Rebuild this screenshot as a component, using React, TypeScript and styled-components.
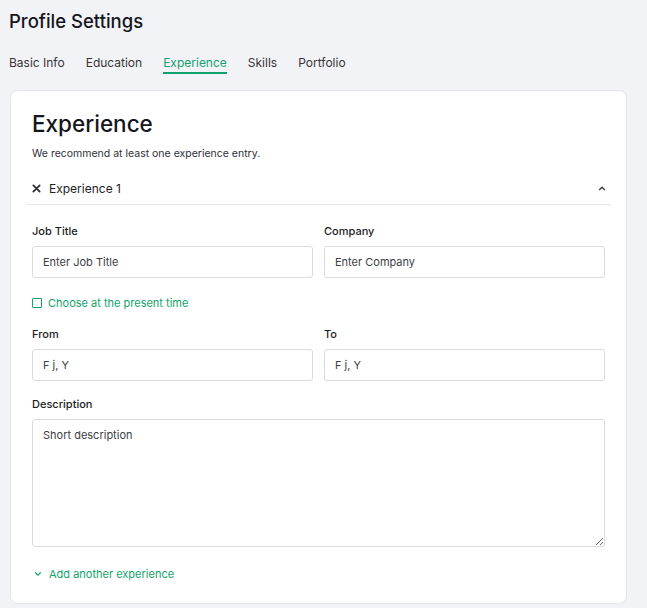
import React, { useState } from "react";
import styled, { createGlobalStyle } from "styled-components";

const GlobalStyle = createGlobalStyle`
  html, body {
    margin: 0;
    padding: 0;
    background: #f2f3f7;
    font-family: "Inter", "Liberation Sans", sans-serif;
    color: #1b1d24;
  }
  * { box-sizing: border-box; }
`;

const TABS = ["Basic Info", "Education", "Experience", "Skills", "Portfolio"];

export default function App() {
  const [active, setActive] = useState("Experience");
  const [present, setPresent] = useState(false);

  return (
    <Page>
      <GlobalStyle />
      <Title>Profile Settings</Title>
      <TabBar>
        {TABS.map((t) => (
          <Tab key={t} $active={t === active} onClick={() => setActive(t)}>
            {t}
          </Tab>
        ))}
      </TabBar>
      <Card>
        <Inner>
          <Heading>Experience</Heading>
          <Hint>We recommend at least one experience entry.</Hint>
        </Inner>
        <EntryHeader>
          <EntryName>
            <svg width="9" height="9" viewBox="0 0 10 10">
              <path d="M1.5 1.5 L8.5 8.5 M8.5 1.5 L1.5 8.5" stroke="#2b2d33" strokeWidth="2" strokeLinecap="round" />
            </svg>
            Experience 1
          </EntryName>
          <svg width="8" height="5" viewBox="0 0 10 6">
            <path d="M1.5 5 L5 1.5 L8.5 5" stroke="#3a3d46" strokeWidth="1.8" fill="none" />
          </svg>
        </EntryHeader>
        <Inner>
          <Row>
            <Field>
              <Label>Job Title</Label>
              <Input placeholder="Enter Job Title" />
            </Field>
            <Field>
              <Label>Company</Label>
              <Input placeholder="Enter Company" />
            </Field>
          </Row>
          <Check>
            <CheckBox type="checkbox" checked={present} onChange={(e) => setPresent(e.target.checked)} />
            Choose at the present time
          </Check>
          <Row>
            <Field>
              <Label>From</Label>
              <Input placeholder="F j, Y" />
            </Field>
            <Field>
              <Label>To</Label>
              <Input placeholder="F j, Y" />
            </Field>
          </Row>
          <Field>
            <Label>Description</Label>
            <TextArea placeholder="Short description" />
          </Field>
          <AddLink>
            <svg width="8" height="6" viewBox="0 0 10 6">
              <path d="M1.5 1 L5 4.5 L8.5 1" stroke="#12a36c" strokeWidth="1.6" fill="none" />
            </svg>
            Add another experience
          </AddLink>
        </Inner>
      </Card>
    </Page>
  );
}

const Page = styled.div`
  padding: 9px 20px 0 9px;
`;

const Title = styled.h1`
  margin: 0;
  font-size: 18.5px;
  font-weight: 500;
  line-height: 24px;
  color: #14161c;
`;

const TabBar = styled.div`
  display: flex;
  gap: 21px;
  margin-top: 22px;
`;

const Tab = styled.div<{ $active: boolean }>`
  font-size: 12px;
  line-height: 16px;
  padding-bottom: 1px;
  color: ${(p) => (p.$active ? "#12a36c" : "#3a3336")};
  border-bottom: 2px solid ${(p) => (p.$active ? "#12a36c" : "transparent")};
  cursor: pointer;
`;

const Card = styled.div`
  margin: 16px 0 0 1px;
  background: #fff;
  border: 1px solid #e3e5ea;
  border-radius: 8px;
  padding: 16px 15px 22px;
`;

const Inner = styled.div`
  padding: 0 6px;
`;

const Heading = styled.h2`
  margin: 2px 0 0;
  font-size: 22.5px;
  font-weight: 500;
  line-height: 30px;
  color: #14161c;
`;

const Hint = styled.p`
  margin: 7px 0 0;
  font-size: 10.5px;
  line-height: 16px;
  color: #2e3038;
`;

const EntryHeader = styled.div`
  display: flex;
  align-items: center;
  justify-content: space-between;
  margin-top: 10px;
  padding: 0 5px 0 6px;
  height: 33px;
  border-bottom: 1px solid #e6e7eb;
`;

const EntryName = styled.div`
  display: flex;
  align-items: center;
  gap: 8px;
  font-size: 12px;
  color: #1b1d24;
`;

const Row = styled.div`
  display: grid;
  grid-template-columns: 1fr 1fr;
  gap: 11px;
  margin-top: 18px;
`;

const Field = styled.div`
  display: flex;
  flex-direction: column;
  ${Row} + & { margin-top: 15px; }
`;

const Label = styled.label`
  font-size: 11px;
  font-weight: 500;
  line-height: 16px;
  color: #1b1d24;
  margin-bottom: 7px;
`;

const Input = styled.input`
  height: 32px;
  border: 1px solid #d9dbe0;
  border-radius: 3px;
  padding: 0 10px;
  font-family: inherit;
  font-size: 11px;
  color: #1b1d24;
  &::placeholder { color: #3c3e46; }
`;

const TextArea = styled.textarea`
  height: 128px;
  border: 1px solid #d9dbe0;
  border-radius: 3px;
  padding: 8px 10px;
  font-family: inherit;
  font-size: 11px;
  color: #1b1d24;
  &::placeholder { color: #3c3e46; }
`;

const Check = styled.label`
  display: flex;
  align-items: center;
  gap: 6px;
  margin-top: 18px;
  margin-bottom: -2px;
  font-size: 11px;
  color: #12a36c;
`;

const CheckBox = styled.input`
  appearance: none;
  margin: 0;
  width: 10px;
  height: 10px;
  border: 1px solid #12a36c;
  border-radius: 1px;
  &:checked { background: #12a36c; }
`;

const AddLink = styled.div`
  display: flex;
  align-items: center;
  gap: 7px;
  margin-top: 20px;
  padding-left: 2px;
  font-size: 11px;
  color: #12a36c;
  cursor: pointer;
`;
